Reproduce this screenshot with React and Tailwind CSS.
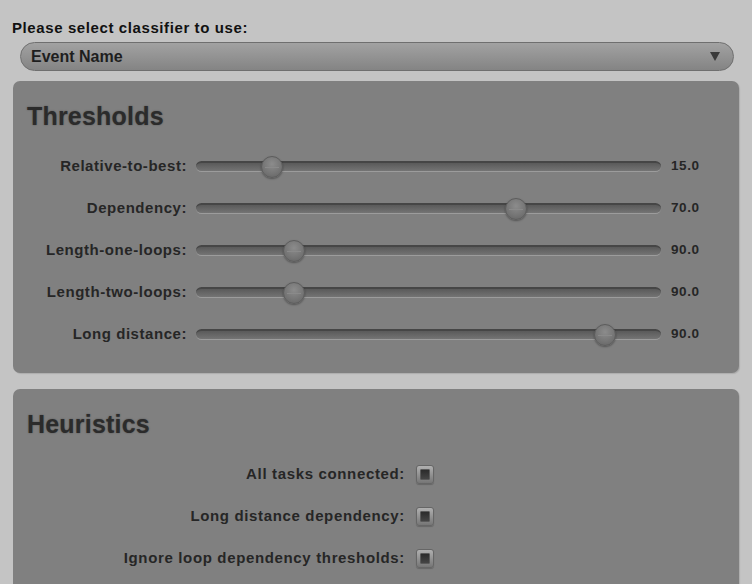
const font = "font-['Liberation_Sans',Arial,sans-serif]";

const sliders = [
  { label: 'Relative-to-best:', value: '15.0', thumb: 76 },
  { label: 'Dependency:', value: '70.0', thumb: 320 },
  { label: 'Length-one-loops:', value: '90.0', thumb: 98 },
  { label: 'Length-two-loops:', value: '90.0', thumb: 98 },
  { label: 'Long distance:', value: '90.0', thumb: 409 },
];

const heuristics = ['All tasks connected:', 'Long distance dependency:', 'Ignore loop dependency thresholds:'];

function Panel({ title, children }) {
  return (
    <div className="ml-px w-[726px] rounded-[7px] bg-[#808080] pt-[20px] pb-[18px] shadow-[1px_1px_1px_rgba(0,0,0,0.12)]">
      <h2 className="pl-[14px] text-[25px] leading-[30px] font-bold tracking-[0.2px] text-[#2b2b2b] [text-shadow:0_0_2px_rgba(0,0,0,0.35)]">{title}</h2>
      <div className="mt-[14px]">{children}</div>
    </div>
  );
}

function Slider({ label, value, thumb }) {
  return (
    <div className="flex h-[42px] items-center">
      <div className="w-[174px] text-right text-[15px] font-bold tracking-[0.55px] text-[#262626]">{label}</div>
      <div className="relative ml-[9px] h-[11px] w-[465px] rounded-full bg-gradient-to-b from-[#5a5a5a] to-[#747474] border-t-2 border-t-[#464646] border-b border-b-[#9c9c9c]">
        <div
          className="absolute top-1/2 h-[22px] w-[22px] -translate-x-1/2 -translate-y-1/2 rounded-full border border-[#5c5c5c] bg-[radial-gradient(circle_at_50%_35%,#8c8c8c_0%,#747474_60%,#626262_100%)] shadow-[0_1px_2px_rgba(0,0,0,0.35)]"
          style={{ left: thumb }}
        >
          <div className="mx-auto mt-[10px] h-px w-[14px] bg-[#8a8a8a]" />
        </div>
      </div>
      <div className="ml-[10px] text-[13.5px] font-bold tracking-[0.6px] text-[#262626]">{value}</div>
    </div>
  );
}

function Check({ label }) {
  return (
    <div className="flex h-[42px] w-[421px] items-center justify-end gap-[11px]">
      <span className="text-[15px] font-bold tracking-[0.65px] text-[#262626]">{label}</span>
      <span className="flex h-[19px] w-[18px] items-center justify-center rounded-[3px] border border-[#666] bg-gradient-to-b from-[#b0b0b0] to-[#767676] shadow-[0_1px_1px_rgba(0,0,0,0.2)]">
        <span className="h-[11px] w-[10px] rounded-[1px] border border-[#5a5a5a] bg-gradient-to-b from-[#2c2c2c] to-[#454545]" />
      </span>
    </div>
  );
}

export default function App() {
  return (
    <div className={`${font} h-[584px] w-[752px] overflow-hidden bg-[#c4c4c4] pl-[12px] pt-[20px]`}>
      <div className="text-[15px] leading-[16px] font-bold tracking-[0.6px] text-[#111]">Please select classifier to use:</div>
      <div className="ml-[8px] mt-[6px] flex h-[29px] w-[714px] items-center justify-between rounded-full border border-[#6f6f6f] bg-gradient-to-b from-[#a2a2a2] to-[#848484] pl-[10px] pr-[13px]">
        <span className="text-[16px] font-bold text-[#1e1e1e]">Event Name</span>
        <svg width="10" height="9" viewBox="0 0 10 9"><path d="M0 0h10L5 9z" fill="#3a3a3a" /></svg>
      </div>
      <div className="mt-[10px]">
        <Panel title="Thresholds">
          {sliders.map((s) => <Slider key={s.label} {...s} />)}
        </Panel>
      </div>
      <div className="mt-[16px]">
        <Panel title="Heuristics">
          {heuristics.map((h) => <Check key={h} label={h} />)}
        </Panel>
      </div>
    </div>
  );
}
